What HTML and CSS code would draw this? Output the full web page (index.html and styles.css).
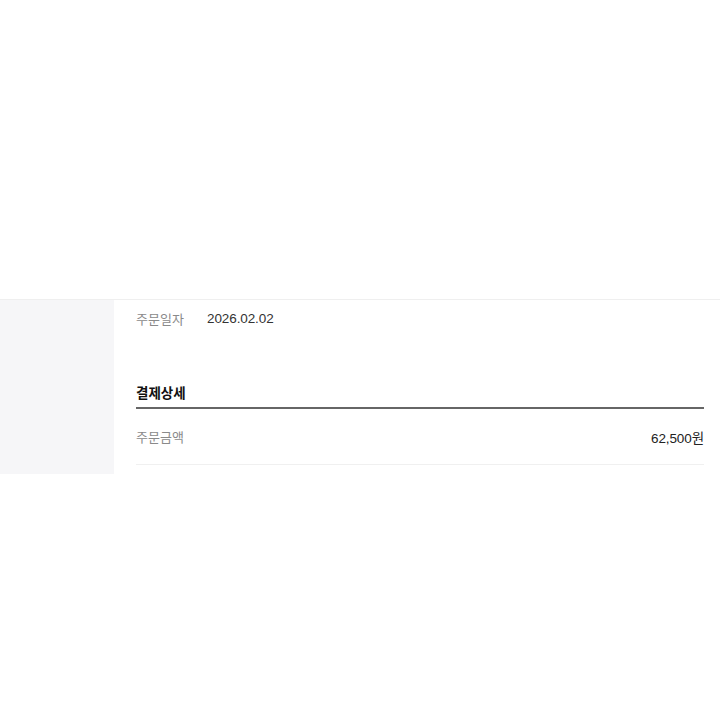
FILE: index.html
```html
<!DOCTYPE html>
<html lang="ko">
<head>
<meta charset="utf-8">
<link rel="stylesheet" href="styles.css">
</head>
<body>
<div class="spacer"></div>
<div class="layout">
  <aside class="side"></aside>
  <main class="content">
    <div class="info-row">
      <span class="label">주문일자</span>
      <span class="value">2026.02.02</span>
    </div>
    <h2 class="section-title">결제상세</h2>
    <div class="amount-row">
      <span class="label">주문금액</span>
      <span class="amount">62,500원</span>
    </div>
  </main>
</div>
</body>
</html>
```
FILE: styles.css
```css
html, body {
  margin: 0;
  padding: 0;
  background: #ffffff;
  font-family: "Noto Sans CJK KR", "Noto Sans", "Liberation Sans", sans-serif;
}
.spacer {
  height: 299px;
}
.layout {
  display: flex;
  border-top: 1px solid #efefef;
  gap: 22px;
}
.side {
  width: 114px;
  background: #f6f6f8;
  flex-shrink: 0;
}
.content {
  flex: 1;
  padding-right: 16px;
  padding-bottom: 9px;
}
.info-row {
  display: flex;
  height: 37px;
  align-items: center;
  font-size: 13px;
}
.info-row .label {
  width: 71px;
  color: #8a8a8a;
}
.info-row .value,
.amount {
  font-family: "Liberation Sans", "Noto Sans CJK KR", sans-serif;
  font-size: 13.5px;
  letter-spacing: -0.1px;
}
.info-row .value {
  color: #333333;
}
.section-title {
  margin: 45px 0 0;
  font-size: 13.5px;
  font-weight: 700;
  line-height: 20px;
  color: #111111;
  padding-bottom: 5px;
  border-bottom: 2px solid #666666;
}
.amount-row {
  display: flex;
  justify-content: space-between;
  align-items: center;
  height: 55px;
  border-bottom: 1px solid #f0f0f0;
  font-size: 13px;
}
.amount-row .label {
  color: #8a8a8a;
}
.amount {
  color: #222222;
}
```
